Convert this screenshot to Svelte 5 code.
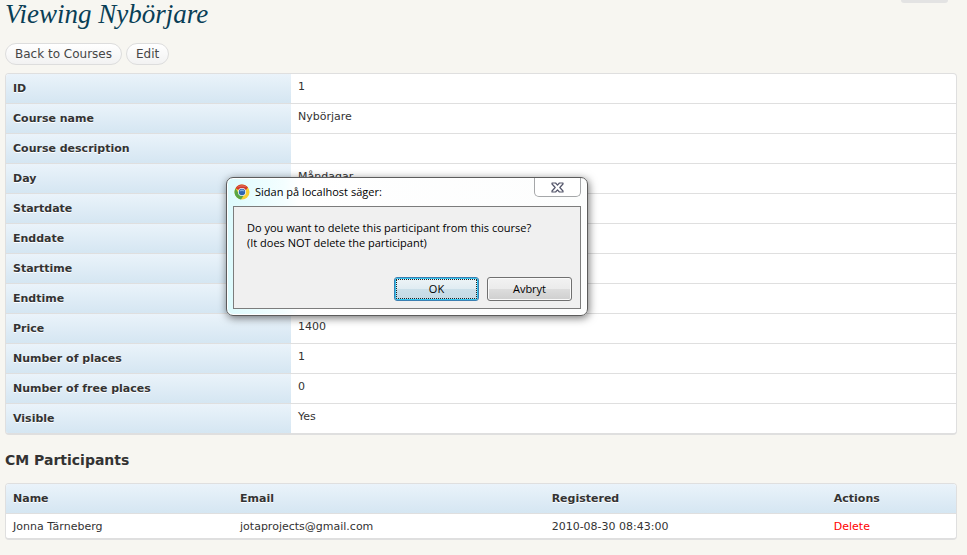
<script>
  const details = [
    ['ID', '1'],
    ['Course name', 'Nybörjare'],
    ['Course description', ''],
    ['Day', 'Måndagar'],
    ['Startdate', ''],
    ['Enddate', ''],
    ['Starttime', ''],
    ['Endtime', ''],
    ['Price', '1400'],
    ['Number of places', '1'],
    ['Number of free places', '0'],
    ['Visible', 'Yes']
  ];
  const participants = [
    { name: 'Jonna Tärneberg', email: 'jotaprojects@gmail.com', registered: '2010-08-30 08:43:00' }
  ];
</script>

<div class="page">
  <div class="tab"></div>
  <main>
    <h1>Viewing Nybörjare</h1>
    <div class="actions">
      <button type="button">Back to Courses</button>
      <button type="button">Edit</button>
    </div>

    <div class="box">
      <table class="details">
        <tbody>
          {#each details as [label, value]}
            <tr><th scope="row">{label}</th><td>{value}</td></tr>
          {/each}
        </tbody>
      </table>
    </div>

    <h2>CM Participants</h2>

    <div class="box">
      <table class="people">
        <thead>
          <tr>
            <th scope="col" class="name">Name</th>
            <th scope="col" class="email">Email</th>
            <th scope="col" class="registered">Registered</th>
            <th scope="col">Actions</th>
          </tr>
        </thead>
        <tbody>
          {#each participants as p}
            <tr>
              <td>{p.name}</td>
              <td>{p.email}</td>
              <td>{p.registered}</td>
              <td><a href="#delete">Delete</a></td>
            </tr>
          {/each}
        </tbody>
      </table>
    </div>
  </main>

  <div class="dialog" role="alertdialog" aria-labelledby="dlg-title" aria-describedby="dlg-text">
    <div class="titlebar">
      <svg width="16" height="16" viewBox="0 0 16 16" aria-hidden="true">
        <circle cx="8" cy="8" r="7.5" fill="#f7cf33" />
        <path d="M8 8 L1.5 4.2 A7.5 7.5 0 0 1 14 3.6 L11.6 6.6 L8 4.5 Z" fill="#cf3a2a" />
        <path d="M1.5 4.2 A7.5 7.5 0 0 0 7 15.4 L10.4 10.6 L5.4 10.6 Z" fill="#58a646" />
        <path d="M2.6 4 A6.6 6.6 0 0 1 13 3.6 Q8 1.4 2.6 4 Z" fill="#e8705c" />
        <circle cx="8" cy="8" r="4" fill="#f4f6f8" />
        <circle cx="8" cy="8" r="3.2" fill="#2f66b0" />
        <path d="M5.4 7.4 A2.7 2.7 0 0 1 10.6 7.4 Q8 6.6 5.4 7.4 Z" fill="#7fb0e2" />
      </svg>
      <span id="dlg-title">Sidan på localhost säger:</span>
      <button type="button" class="close" aria-label="Stäng">
        <svg width="13" height="11" viewBox="0 0 13 11" aria-hidden="true">
          <path d="M1 1 H4.6 L6.5 3.2 L8.4 1 H12 V2 L8.8 5.5 L12 9 V10 H8.4 L6.5 7.8 L4.6 10 H1 V9 L4.2 5.5 L1 2 Z" fill="#fff" stroke="#54566b" stroke-width="1.2" stroke-linejoin="round" />
        </svg>
      </button>
    </div>
    <div class="content">
      <p id="dlg-text">Do you want to delete this participant from this course?<br />(It does NOT delete the participant)</p>
      <div class="choices">
        <button type="button" class="ok">OK</button>
        <button type="button">Avbryt</button>
      </div>
    </div>
  </div>
</div>

<style>
  :global(body) {
    margin: 0;
    background: #f7f6f1;
  }
  .page {
    position: relative;
    box-sizing: border-box;
    min-height: 100vh;
    background: #f7f6f1;
    color: #333;
    font: 11px/16px Verdana, "DejaVu Sans", sans-serif;
  }
  .tab {
    position: absolute;
    top: 0;
    right: 19px;
    width: 47px;
    height: 3px;
    border-radius: 0 0 3px 3px;
    background: #e3e3e3;
  }
  main {
    padding: 0 10px 14px 5px;
  }
  h1 {
    margin: 0;
    padding-bottom: 15px;
    color: #093e56;
    font: italic 27px/28px Georgia, "Liberation Serif", serif;
  }
  .actions {
    display: flex;
    gap: 4px;
    margin-bottom: 8px;
  }
  .actions button {
    box-sizing: border-box;
    height: 22px;
    padding: 0 9px;
    border: 1px solid #ddd;
    border-radius: 11px;
    background: linear-gradient(#fff, #f2f2f2);
    color: #464646;
    font: inherit;
    font-size: 12px;
  }
  .box {
    border: 1px solid #dfdfdf;
    border-bottom-width: 2px;
    border-radius: 4px;
    background: #fff;
    overflow: hidden;
  }
  table {
    width: 100%;
    border-spacing: 0;
    table-layout: fixed;
  }
  th,
  td {
    box-sizing: border-box;
    padding: 5px 7px 3px;
    text-align: left;
    vertical-align: top;
  }
  th {
    height: 30px;
    padding-top: 7px;
    background: linear-gradient(#eaf3fa, #d5e6f2);
    text-shadow: 0 1px 0 #fff;
  }
  .details th {
    width: 30%;
  }
  .details th,
  .details td,
  .people th {
    border-bottom: 1px solid #dfdfdf;
  }
  .details tr:last-child th,
  .details tr:last-child td {
    height: 29px;
    border-bottom: 0;
  }
  .name {
    width: 23.9%;
  }
  .email {
    width: 32.8%;
  }
  .registered {
    width: 29.7%;
  }
  h2 {
    margin: 15px 0 13px;
    font-size: 14px;
    line-height: 20px;
  }
  a {
    color: #f00;
    text-decoration: none;
  }
  .dialog {
    position: absolute;
    top: 177px;
    left: 226px;
    box-sizing: border-box;
    width: 362px;
    padding: 0 6px 6px;
    border: 1px solid #5c5c5c;
    border-radius: 7px;
    background: linear-gradient(90deg, #ddfbfd, #f4feff 16%, #fff 20%, #fcfdfd);
    box-shadow: 1px 2px 9px rgba(0, 0, 0, 0.55), inset 0 0 0 1px #fff;
    color: #000;
    font: 11px/15px "Segoe UI", "Open Sans", sans-serif;
  }
  .titlebar {
    display: flex;
    align-items: center;
    gap: 5px;
    height: 28px;
    padding-left: 1px;
  }
  .titlebar span {
    padding-bottom: 2px;
  }
  .close {
    display: flex;
    align-items: center;
    justify-content: center;
    align-self: flex-start;
    box-sizing: border-box;
    width: 47px;
    height: 19px;
    margin-left: auto;
    padding: 0;
    border: 1px solid #a5a7a9;
    border-top: 0;
    border-radius: 0 0 5px 5px;
    background: #fff;
  }
  .content {
    padding: 13px 8px 7px 13px;
    border: 1px solid #7c7c7c;
    background: #f0f0f0;
  }
  p {
    margin: 0;
  }
  .choices {
    display: flex;
    justify-content: flex-end;
    gap: 8px;
    margin-top: 27px;
  }
  .choices button {
    box-sizing: border-box;
    width: 85px;
    height: 24px;
    padding: 0 0 2px;
    border: 1px solid #707070;
    border-radius: 3px;
    background: linear-gradient(#f2f2f2, #ebebeb 50%, #dddddd 50%, #cfcfcf);
    box-shadow: inset 0 0 0 1px #fafafa;
    color: #000;
    font: inherit;
  }
  .choices .ok {
    border-color: #3c7fb1;
    background: linear-gradient(#eef4f7, #e0ecf2 50%, #cbdfe9 50%, #c4d9e4);
    box-shadow: inset 0 0 0 1px #35c4ee;
    outline: 1px dotted #222;
    outline-offset: -3px;
  }
</style>
